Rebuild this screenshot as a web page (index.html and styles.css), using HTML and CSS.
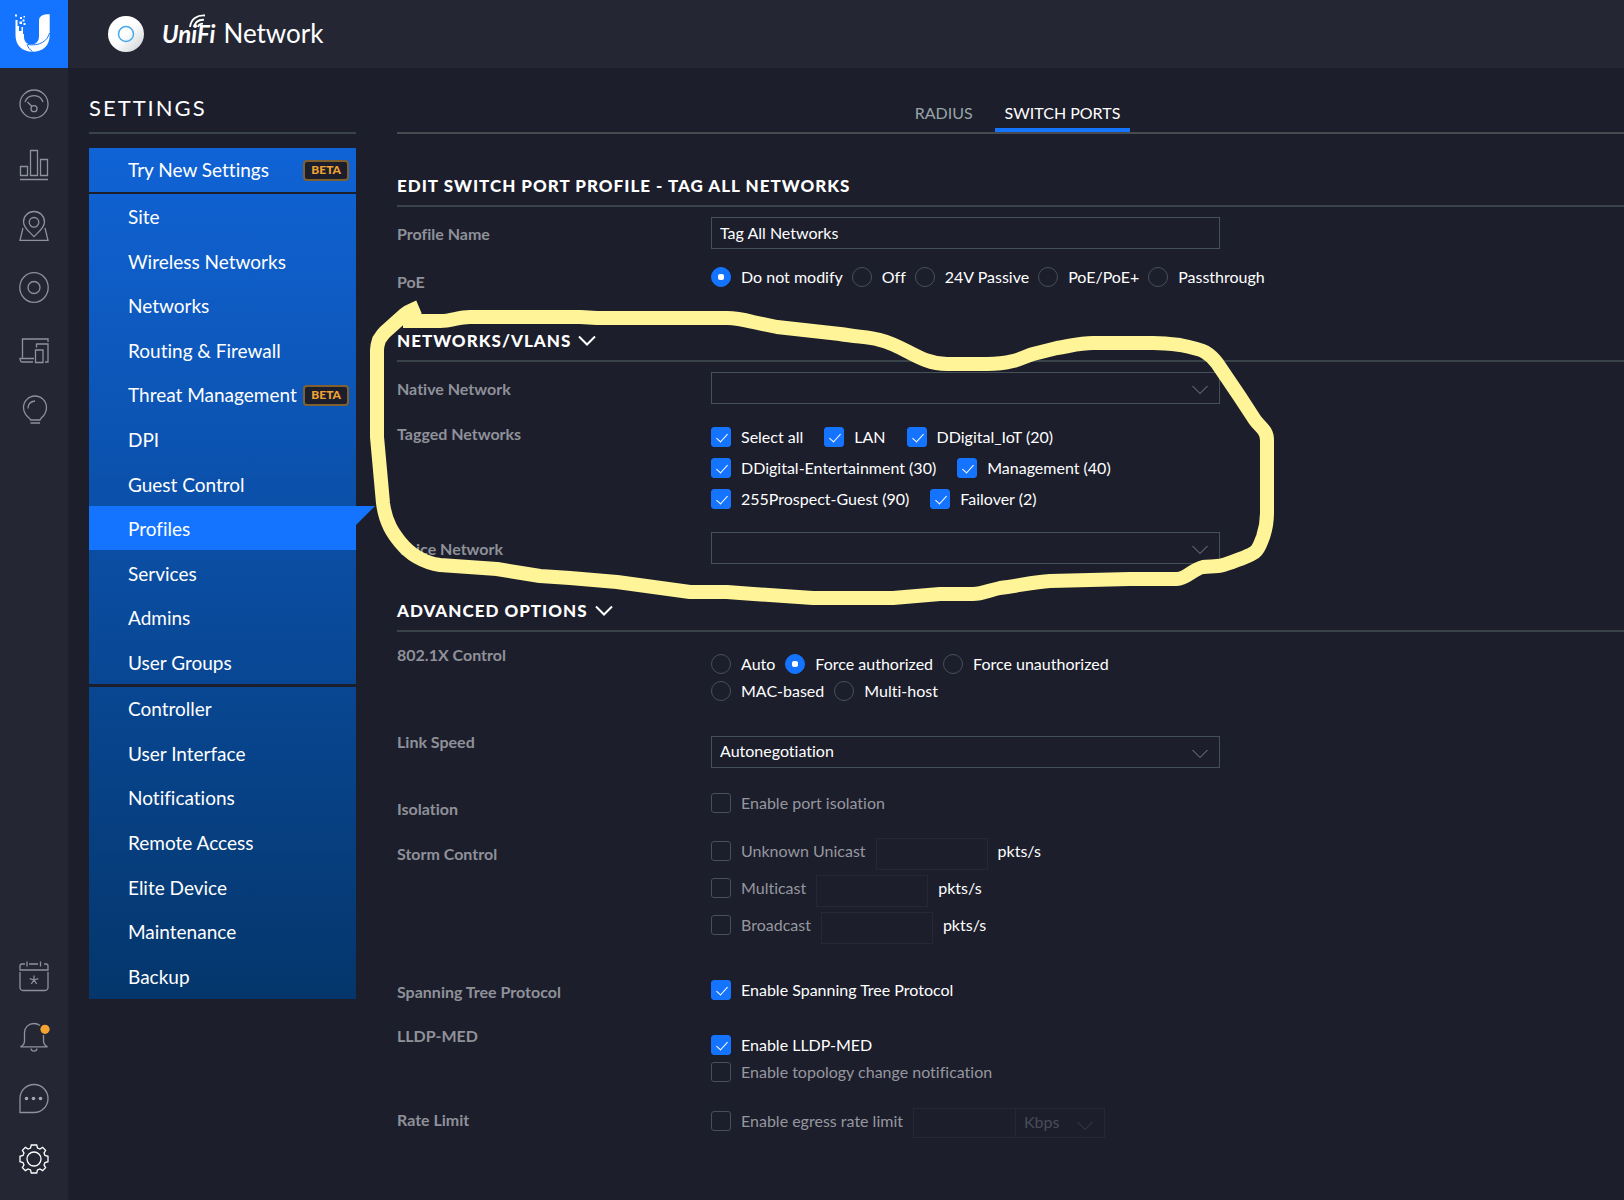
FILE: index.html
```html
<!DOCTYPE html>
<html lang="en">
<head>
    <meta charset="UTF-8">
    <title>UniFi Network</title>
    <link rel="stylesheet" href="styles.css">
</head>
<body>
<div class="app">
    <header class="header">
        <a class="logo" href="#" aria-label="Home">
            <svg width="68" height="68" viewBox="0 0 68 68">
                <path fill="#fff" d="M15.5 20h2v6h1.5v5h2.500v-4h1.500v7h1V37c0 4.500 3 7.500 7 7.500 5 0 8-3 8-8.500V21c0-5 3.500-6.700 10.700-6.700V35c0 10.500-6.500 16.700-17 16.700S15.500 45.500 15.500 35z"/>
                <path fill="#fff" d="M15 14.500h2v2h-2zM20 17h2v2h-2zM22.500 19.500h2v2h-2zM19.500 21.500h2.500v2.500h-2.500zM23.500 16h1.500v1.500h-1.500zM23.500 23h2v2h-2z"/>
                <path fill="none" stroke="#1574ff" stroke-width="1" d="M49.500 33c-2 8-10 13.500-22 11.500M27 44.500c1 3 3 5.500 5.500 7"/>
            </svg>
        </a>
        <svg class="device" width="36" height="36" viewBox="0 0 36 36">
            <defs>
                <linearGradient id="shell" x1="0" y1="0" x2="1" y2="1">
                    <stop offset="0.500" stop-color="#fff"/>
                    <stop offset="1" stop-color="#c9ccd1"/>
                </linearGradient>
            </defs>
            <circle cx="18" cy="18" r="18" fill="url(#shell)"/>
            <circle cx="18" cy="18" r="7.500" fill="none" stroke="#46a9ee" stroke-width="1.500"/>
        </svg>
        <div class="brand">
            <span class="brand-unifi">UniFi<svg class="waves" width="20" height="14" viewBox="0 0 20 14" fill="none" stroke="#fff" stroke-width="1.800">
                <path d="M2 13C3 5 9 1 17 1.500M6 13C7 8.500 10.500 5.500 16 5.800M10 13c.5-2 2-3.300 5-3.300"/>
            </svg></span>
            <span class="brand-name">Network</span>
        </div>
    </header>

    <nav class="rail">
        <a href="#" aria-label="Dashboard"><svg viewBox="0 0 30 30"><circle cx="15" cy="15" r="14"/><path d="M6 13a9.500 9.500 0 0 1 18 0M8.500 13l4.500 4.500"/><circle cx="15" cy="19.700" r="3"/></svg></a>
        <a href="#" aria-label="Statistics"><svg viewBox="0 0 30 30"><path d="M1.500 16.500h7v9h-7zM11.500.5h7v25h-7zM21.500 9.500h7v16h-7zM1 29.500h28"/></svg></a>
        <a href="#" aria-label="Map"><svg viewBox="0 0 30 30"><circle cx="15" cy="11.300" r="4.800"/><path d="M15 25.500C11 21.500 4.500 17 4.500 11a10.500 10.500 0 0 1 21 0c0 6-6.500 10.500-10.500 14.500zM4 17L1 29.300h28L26 17"/></svg></a>
        <a href="#" aria-label="Devices"><svg viewBox="0 0 30 30"><ellipse cx="15" cy="15.500" rx="14.200" ry="14.800"/><circle cx="15" cy="15.500" r="6"/></svg></a>
        <a href="#" aria-label="Clients"><svg viewBox="0 0 30 30"><path d="M3.500 24.500V6h25.500v3M15 25.500H1c0 2 1 3.500 2.500 3.500H14M17.500 14.500V11H29v18h-3M16.500 17H24v12.500h-7.500z"/></svg></a>
        <a href="#" aria-label="Insights"><svg viewBox="0 0 30 30"><path d="M11.500 26c0-2-7-4-7-12.500a11.500 11.500 0 0 1 23 0c0 8.500-6.500 10.500-6.500 12.500zM11.500 29h9.500M9 14.500c0-4 2.500-7 7-7.500"/></svg></a>
        <a class="rail-bottom" href="#" aria-label="Events"><svg viewBox="0 0 30 30"><path d="M6 3H3a2 2 0 0 0-2 2v4h28V5a2 2 0 0 0-2-2h-2M10 3h9M8 .5v5M21.500.5v5M1 11v15.500a3 3 0 0 0 3 3h22a3 3 0 0 0 3-3V11M15 14.500V19M15 19l-4.300-1.400M15 19l4.300-1.400M15 19l-2.700 4M15 19l2.700 4"/></svg></a>
        <a href="#" aria-label="Alerts"><svg viewBox="0 0 30 30"><path d="M21 3.500C19 2 17 1.500 15 1.500c-5.500 0-9.500 4-9.500 9V19c0 3-1.500 4.500-4 5.800h27c-2.500-1.300-4-2.800-4-5.800v-6M12 26.500c.5 3.500 5.500 3.500 6 0"/><circle class="alert-dot" cx="26" cy="7.300" r="4.600"/></svg></a>
        <a href="#" aria-label="Chat"><svg viewBox="0 0 30 30"><path d="M1 29.500V15a14 14 0 1 1 14 14.500z"/><g class="chat-dots"><circle cx="7.500" cy="15.500" r="1.800"/><circle cx="14.500" cy="15.500" r="1.800"/><circle cx="21.500" cy="15.500" r="1.800"/></g></svg></a>
        <a class="current" href="#" aria-label="Settings"><svg viewBox="0 0 30 30"><path d="M12.300 1h5.400l.8 3 2.400 1 2.700-1.600 3 3L25 9.100l1 2.400 3 .8v5.400l-3 .8-1 2.400 1.600 2.700-3 3-2.700-1.600-2.400 1-.8 3h-5.400l-.8-3-2.400-1-2.700 1.600-3-3L5 20.900l-1-2.400-3-.8v-5.400l3-.8 1-2.400-1.600-2.700 3-3L9.100 5l2.400-1z"/><circle cx="15" cy="15" r="7"/></svg></a>
    </nav>

    <aside class="sidebar">
        <h1>Settings</h1>
        <nav class="menu">
            <div class="menu-group">
                <a href="#">Try New Settings <span class="beta">BETA</span></a>
            </div>
            <div class="menu-group group-site">
                <a href="#">Site</a>
                <a href="#">Wireless Networks</a>
                <a href="#">Networks</a>
                <a href="#">Routing &amp; Firewall</a>
                <a href="#">Threat Management <span class="beta">BETA</span></a>
                <a href="#">DPI</a>
                <a href="#">Guest Control</a>
                <a class="active" href="#">Profiles</a>
                <a href="#">Services</a>
                <a href="#">Admins</a>
                <a href="#">User Groups</a>
            </div>
            <div class="menu-group group-controller">
                <a href="#">Controller</a>
                <a href="#">User Interface</a>
                <a href="#">Notifications</a>
                <a href="#">Remote Access</a>
                <a href="#">Elite Device</a>
                <a href="#">Maintenance</a>
                <a href="#">Backup</a>
            </div>
        </nav>
    </aside>

    <main class="content">
        <div class="tabs">
            <a href="#">RADIUS</a>
            <a class="active" href="#">SWITCH PORTS</a>
        </div>

        <form>
            <h2>EDIT SWITCH PORT PROFILE - TAG ALL NETWORKS</h2>
            <div class="row row-input">
                <label class="name" for="profile-name">Profile Name</label>
                <div class="field"><input class="text" id="profile-name" type="text" value="Tag All Networks"></div>
            </div>
            <div class="row row-poe">
                <span class="name">PoE</span>
                <div class="field options">
                    <label><input type="radio" name="poe" checked>Do not modify</label>
                    <label><input type="radio" name="poe">Off</label>
                    <label><input type="radio" name="poe">24V Passive</label>
                    <label><input type="radio" name="poe">PoE/PoE+</label>
                    <label><input type="radio" name="poe">Passthrough</label>
                </div>
            </div>

            <h2 class="fold"><button type="button">NETWORKS/VLANS<svg width="18" height="12" viewBox="0 0 18 12"><path d="M1 1.500l8 8 8-8"/></svg></button></h2>
            <div class="row row-input">
                <label class="name" for="native">Native Network</label>
                <div class="field select">
                    <select id="native"><option></option></select>
                    <svg width="16" height="10" viewBox="0 0 16 10"><path d="M.5 1L8 8.500 15.500 1"/></svg>
                </div>
            </div>
            <div class="row row-tagged">
                <span class="name">Tagged Networks</span>
                <div class="field options">
                    <label><input type="checkbox" checked>Select all</label>
                    <label><input type="checkbox" checked>LAN</label>
                    <label><input type="checkbox" checked>DDigital_IoT (20)</label>
                    <label><input type="checkbox" checked>DDigital-Entertainment (30)</label>
                    <label><input type="checkbox" checked>Management (40)</label>
                    <label><input type="checkbox" checked>255Prospect-Guest (90)</label>
                    <label><input type="checkbox" checked>Failover (2)</label>
                </div>
            </div>
            <div class="row row-input row-voice">
                <label class="name" for="voice">Voice Network</label>
                <div class="field select">
                    <select id="voice"><option></option></select>
                    <svg width="16" height="10" viewBox="0 0 16 10"><path d="M.5 1L8 8.500 15.500 1"/></svg>
                </div>
            </div>

            <h2 class="fold"><button type="button">ADVANCED OPTIONS<svg width="18" height="12" viewBox="0 0 18 12"><path d="M1 1.500l8 8 8-8"/></svg></button></h2>
            <div class="row row-control">
                <span class="name">802.1X Control</span>
                <div class="field options">
                    <label><input type="radio" name="dot1x">Auto</label>
                    <label><input type="radio" name="dot1x" checked>Force authorized</label>
                    <label><input type="radio" name="dot1x">Force unauthorized</label>
                    <label><input type="radio" name="dot1x">MAC-based</label>
                    <label><input type="radio" name="dot1x">Multi-host</label>
                </div>
            </div>
            <div class="row row-speed">
                <label class="name" for="speed">Link Speed</label>
                <div class="field select">
                    <select id="speed"><option>Autonegotiation</option></select>
                    <svg width="16" height="10" viewBox="0 0 16 10"><path d="M.5 1L8 8.500 15.500 1"/></svg>
                </div>
            </div>
            <div class="row row-isolation">
                <span class="name">Isolation</span>
                <div class="field options">
                    <label class="off"><input type="checkbox">Enable port isolation</label>
                </div>
            </div>
            <div class="row row-storm">
                <span class="name">Storm Control</span>
                <div class="field storm">
                    <div class="rate">
                        <label class="off"><input type="checkbox">Unknown Unicast</label>
                        <input class="text" type="text" aria-label="Unknown Unicast rate" disabled>
                        <span>pkts/s</span>
                    </div>
                    <div class="rate">
                        <label class="off"><input type="checkbox">Multicast</label>
                        <input class="text" type="text" aria-label="Multicast rate" disabled>
                        <span>pkts/s</span>
                    </div>
                    <div class="rate">
                        <label class="off"><input type="checkbox">Broadcast</label>
                        <input class="text" type="text" aria-label="Broadcast rate" disabled>
                        <span>pkts/s</span>
                    </div>
                </div>
            </div>
            <div class="row row-stp">
                <span class="name">Spanning Tree Protocol</span>
                <div class="field options">
                    <label><input type="checkbox" checked>Enable Spanning Tree Protocol</label>
                </div>
            </div>
            <div class="row row-lldp">
                <span class="name">LLDP-MED</span>
                <div class="field options">
                    <label><input type="checkbox" checked>Enable LLDP-MED</label>
                    <label class="off"><input type="checkbox">Enable topology change notification</label>
                </div>
            </div>
            <div class="row row-limit">
                <span class="name">Rate Limit</span>
                <div class="field rate">
                    <label class="off"><input type="checkbox">Enable egress rate limit</label>
                    <div class="unit">
                        <input class="text" type="text" aria-label="Egress rate limit" disabled>
                        <div class="select">
                            <select aria-label="Unit" disabled><option>Kbps</option></select>
                            <svg width="16" height="10" viewBox="0 0 16 10"><path d="M.5 1L8 8.500 15.500 1"/></svg>
                        </div>
                    </div>
                </div>
            </div>
        </form>
    </main>

    <!-- hand drawn marker round the VLAN section -->
    <svg class="marker" width="1300" height="620" viewBox="0 0 1300 620">
        <path d="M403 321H440C452 321 458 317 470 317H580L597 318H727C737 318 745 320 753 322L777 327L840 334C858 337 870 337 880 340C905 346 920 364 947 364H987C998 364 1005 363 1013 361C1022 359 1026 356 1033 354L1057 348C1070 346 1080 343 1093 343H1153C1163 343 1172 344 1180 345C1190 347 1200 349 1205 352C1210 355 1214 359 1217 363L1240 397L1255 420C1260 427 1267 430 1267 440V513C1267 523 1265 531 1263 537C1261 542 1259 549 1255 552C1248 557 1235 561 1223 565C1216 567 1209 566 1203 567C1193 569 1186 579 1177 579H1130L1050 581C1033 582 1018 586 1000 588C990 590 982 594 973 594L940 594L893 598H813L740 593L727 592H690L617 582L570 578L540 576L497 569L440 565C432 564 424 561 417 557C410 553 405 548 400 542C396 537 393 533 390 527C386 519 384 511 383 503L377 437V350C377 346 378 343 379 340C381 337 382 335 385 332L404 315C408 311 412 310 419 307"/>
    </svg>
</div>
</body>
</html>
```

FILE: styles.css
```css
*{
    box-sizing:border-box;
}

body{
    margin:0;
    background-color:#1c1e2c;
    color:#fff;
    font-family:Lato, sans-serif;
    font-size:16px;
    line-height:20px;
    font-variant-ligatures:none;
}

a{
    color:#fff;
    text-decoration:none;
}

.app{
    position:relative;
    min-height:100vh;
    overflow:hidden;
    display:grid;
    grid-template-columns:68px 288px 1fr;
    grid-template-rows:68px 1fr;
}

/* header */
.header{
    grid-column:1 / 4;
    display:flex;
    align-items:center;
    background-color:#242634;
}

.logo{
    width:68px;
    height:68px;
    background-color:#1574ff;
}

.device{
    margin-left:40px;
}

.brand{
    display:flex;
    align-items:baseline;
    gap:8px;
    margin-left:18px;
    padding-bottom:2px;
    line-height:32px;
}

.brand-unifi{
    position:relative;
    font-size:24px;
    font-style:italic;
    font-weight:bold;
}

.waves{
    position:absolute;
    left:26px;
    top:-4px;
}

.brand-name{
    font-size:26px;
}

/* icon rail */
.rail{
    display:flex;
    flex-direction:column;
    align-items:center;
    gap:31px;
    padding:21px 0 26px;
    background-color:#242634;
}

.rail a{
    height:30px;
}

.rail-bottom{
    margin-top:auto;
}

.rail svg{
    width:30px;
    height:30px;
    overflow:visible;
    fill:none;
    stroke:#8f919b;
    stroke-width:1.3;
}

.rail .current svg{
    stroke:#fff;
}

.rail .alert-dot{
    fill:#f5a431;
    stroke:none;
}

.rail .chat-dots{
    fill:#a5a7b0;
    stroke:none;
}

/* settings menu */
.sidebar{
    padding:28px 0 0 20px;
}

h1{
    margin:0 0 0 1px;
    padding-bottom:12px;
    border-bottom:2px solid #39434a;
    font-size:22px;
    font-weight:normal;
    letter-spacing:2px;
    line-height:24px;
    text-transform:uppercase;
}

.menu{
    margin:14px 0 0 1px;
    background-image:linear-gradient(#1063d6, #04366b);
}

.menu-group{
    display:grid;
    grid-auto-rows:1fr;
    min-height:44px;
}

.group-site{
    min-height:492px;
    border-top:2px solid #1c1e2c;
}

.group-controller{
    min-height:315px;
    border-top:3px solid #1c1e2c;
}

.menu a{
    position:relative;
    display:flex;
    align-items:center;
    justify-content:space-between;
    padding:0 7px 0 39px;
    font-size:19px;
}

.group-site a{
    padding-top:2px;
}

.menu .active{
    background-color:#1574ff;
}

.menu .active::after{
    content:"";
    position:absolute;
    left:100%;
    top:0;
    border-top:19px solid #1574ff;
    border-right:19px solid transparent;
}

.beta{
    padding:0 6px 2px;
    border:2px solid #80602f;
    border-radius:4px;
    background-color:#1c1e2c;
    color:#f0a233;
    font-size:12px;
    font-weight:900;
    line-height:15px;
}

/* tabs */
.content{
    padding-left:41px;
}

.tabs{
    display:flex;
    justify-content:center;
    gap:12px;
    padding:33px 0 0 14px;
    border-bottom:2px solid #474b4f;
}

.tabs a{
    padding:2px 10px 5px;
    border-bottom:4px solid transparent;
    color:#97a5a6;
}

.tabs .active{
    border-bottom-color:#1574ff;
    color:#fff;
}

/* form */
h2{
    margin:40px 0 0;
    padding-bottom:7px;
    border-bottom:2px solid #39434a;
    font-size:17px;
    font-weight:900;
    letter-spacing:1px;
    line-height:24px;
}

h2.fold{
    margin-top:35px;
}

h2 button{
    display:flex;
    align-items:center;
    gap:7px;
    padding:0;
    border:0;
    background:none;
    color:#fff;
    font:inherit;
    letter-spacing:inherit;
}

h2 svg{
    fill:none;
    stroke:#fff;
    stroke-width:2;
}

.row{
    display:grid;
    grid-template-columns:314px minmax(0, 509px);
    margin-top:20px;
}

.name{
    color:#8f9199;
    font-weight:bold;
}

.row-input{
    margin-top:10px;
}

.row-input .name{
    padding-top:7px;
}

.row-poe{
    margin-top:18px;
    padding-bottom:2px;
}

.row-poe .name{
    padding-top:5px;
}

.row-poe .options{
    flex-wrap:nowrap;
    gap:9px;
    white-space:nowrap;
}

.row-tagged .options{
    gap:11px 21px;
    padding-top:3px;
}

.row-voice{
    margin-top:23px;
}

.row-control{
    margin-top:13px;
}

.row-control .options,
.row-lldp .options{
    padding-top:9px;
}

.row-speed{
    margin-top:31px;
}

.row-speed .field{
    margin-top:4px;
}

.row-isolation{
    margin-top:25px;
}

.row-isolation .name,
.row-storm .name{
    padding-top:6px;
}

.row-storm{
    margin-top:19px;
}

.row-stp{
    margin-top:36px;
}

.row-stp .name,
.row-limit .name{
    padding-top:2px;
}

.row-lldp{
    margin-top:24px;
}

.row-limit{
    margin-top:26px;
}

.options{
    display:flex;
    flex-wrap:wrap;
    align-items:flex-start;
    align-content:flex-start;
    gap:7px 10px;
}

.row-lldp .options{
    flex-direction:column;
}

.options label,
.rate label{
    display:flex;
    gap:10px;
}

.off{
    color:#96979e;
}

input,
select{
    margin:0;
    color:#fff;
    font:inherit;
    appearance:none;
}

input[type="radio"],
input[type="checkbox"]{
    position:relative;
    flex:none;
    width:20px;
    height:20px;
    border:1px solid #465157;
    border-radius:3px;
}

input[type="radio"]{
    border-radius:50%;
}

input[type="radio"]:checked,
input[type="checkbox"]:checked{
    border-color:#1574ff;
    background-color:#1574ff;
}

input[type="radio"]:checked::after{
    content:"";
    position:absolute;
    left:6px;
    top:6px;
    width:6px;
    height:6px;
    border-radius:2px;
    background-color:#fff;
}

input[type="checkbox"]:checked::after{
    content:"";
    position:absolute;
    left:7px;
    top:3px;
    width:5px;
    height:10px;
    border:solid #fff;
    border-width:0 1px 1px 0;
    transform:rotate(42deg);
}

.text,
select{
    display:block;
    width:100%;
    height:32px;
    padding:0 8px 2px;
    border:1px solid #465157;
    border-radius:0;
    background-color:transparent;
}

.select{
    position:relative;
}

.select svg{
    position:absolute;
    right:12px;
    top:13px;
    fill:none;
    stroke:#7f828b;
    pointer-events:none;
}

.storm{
    display:grid;
    gap:5px;
}

.rate{
    display:flex;
    align-items:flex-start;
    gap:10px;
}

.rate label,
.rate span{
    padding-top:3px;
}

.rate .text{
    width:112px;
}

.rate .text:disabled,
.rate select:disabled{
    border-color:#262836;
    color:#4a4c57;
    opacity:1;
}

.unit{
    display:flex;
}

.unit .text{
    width:102px;
    height:30px;
    border-right:0;
}

.unit select{
    width:90px;
    height:30px;
}

.unit .select svg{
    stroke:#3c3e4a;
}

.marker{
    position:absolute;
    left:0;
    top:0;
    pointer-events:none;
    fill:none;
    stroke:#fff598;
    stroke-width:14;
    stroke-linejoin:round;
}
```
